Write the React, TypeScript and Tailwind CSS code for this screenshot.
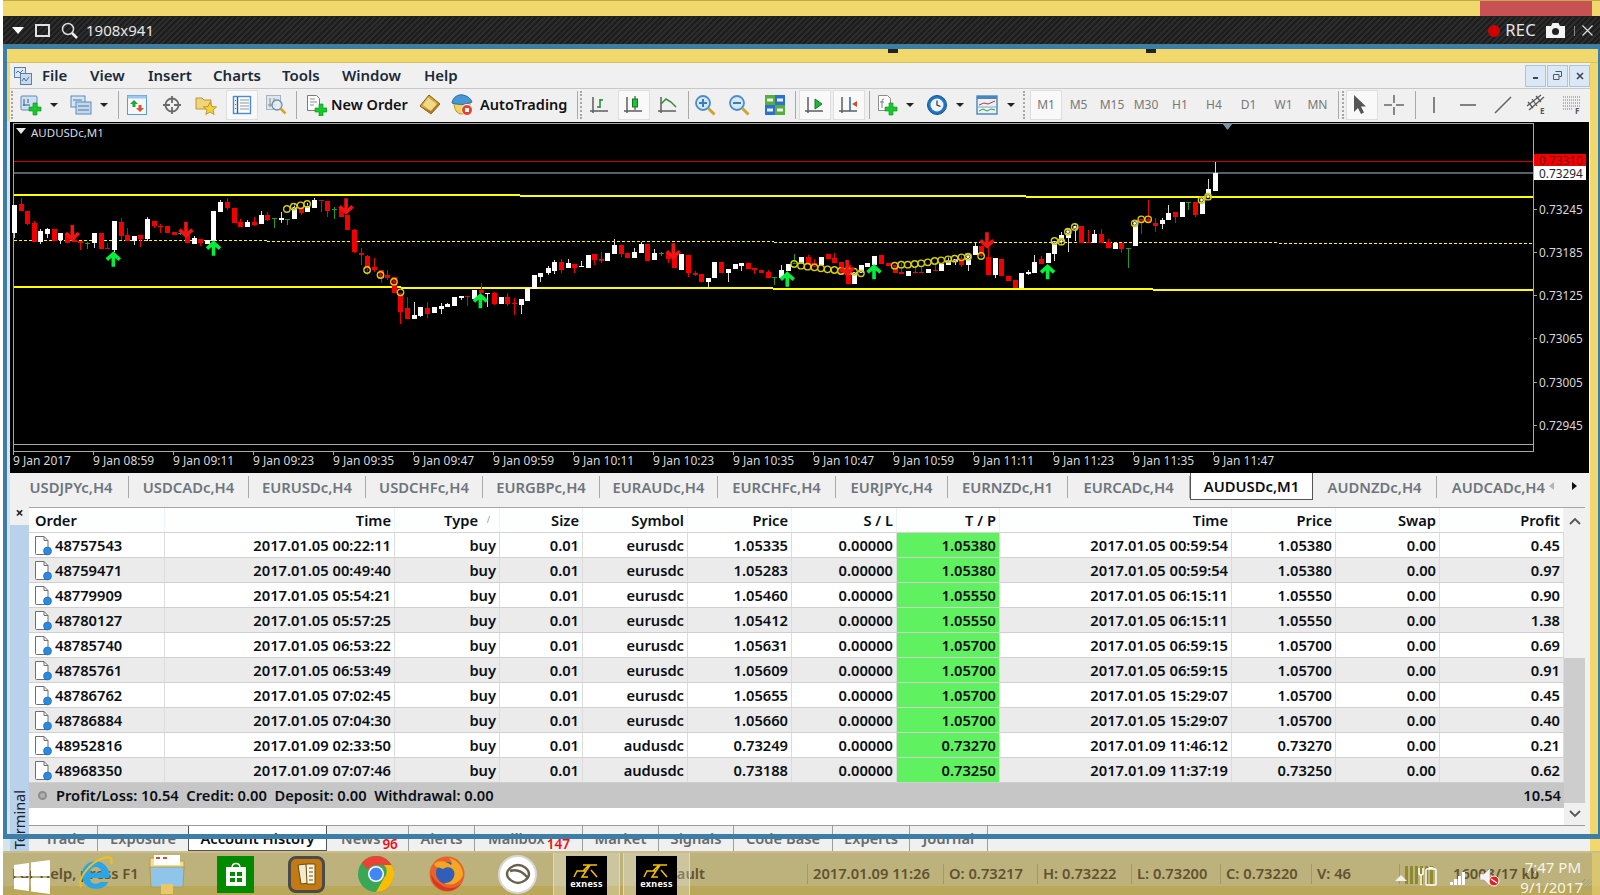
import type { ReactNode } from 'react'

// chart data was read off the reference: [x, colour, wick top, body top, body bottom, wick bottom]
type Candle = [number, 'w' | 'r' | 'g', number, number, number, number]

const seg1: Candle[] = [
  [42, 'w', 225, 225, 308, 325], [60, 'r', 205, 222, 243, 243], [79, 'r', 243, 243, 283, 285], [98, 'r', 272, 280, 335, 335],
  [117, 'w', 297, 303, 335, 343], [137, 'w', 295, 297, 312, 323], [156, 'r', 298, 298, 332, 332], [175, 'w', 310, 310, 330, 343],
  [195, 'r', 312, 312, 338, 338], [214, 'r', 325, 330, 335, 335], [233, 'r', 333, 333, 338, 360], [253, 'g', 336, 338, 342, 357],
  [272, 'w', 310, 310, 340, 353], [292, 'r', 308, 308, 358, 358], [311, 'r', 340, 355, 358, 358], [330, 'w', 273, 273, 360, 365],
  [350, 'r', 265, 276, 318, 330], [369, 'r', 293, 316, 332, 332], [388, 'w', 318, 318, 332, 344], [408, 'r', 316, 316, 328, 350],
  [428, 'w', 262, 267, 326, 332], [447, 'r', 272, 272, 288, 294], [466, 'r', 283, 288, 290, 310], [486, 'r', 288, 288, 310, 310],
  [505, 'r', 306, 306, 314, 314], [524, 'g', 306, 310, 313, 316], [543, 'r', 308, 308, 340, 340], [563, 'w', 318, 323, 342, 342],
  [582, 'r', 326, 326, 340, 347], [601, 'w', 330, 330, 342, 342], [620, 'w', 243, 243, 332, 336], [640, 'w', 210, 215, 246, 246],
  [660, 'r', 205, 217, 233, 240], [679, 'r', 233, 233, 278, 278], [698, 'r', 268, 276, 290, 290], [718, 'w', 270, 275, 290, 290],
  [737, 'r', 262, 276, 285, 287], [757, 'w', 243, 254, 283, 283], [776, 'r', 245, 255, 270, 272], [795, 'g', 265, 265, 268, 293],
  [815, 'w', 245, 265, 270, 278], [834, 'g', 266, 266, 268, 286], [853, 'w', 220, 230, 268, 268], [873, 'r', 230, 230, 248, 255],
  [892, 'w', 218, 228, 247, 247], [912, 'w', 203, 210, 233, 233], [931, 'r', 210, 210, 212, 245], [950, 'r', 213, 213, 244, 260],
  [970, 'g', 230, 236, 238, 268], [989, 'r', 235, 235, 262, 262], [1008, 'r', 255, 255, 300, 300], [1028, 'r', 296, 300, 365, 368],
  [1047, 'r', 355, 370, 376, 405], [1067, 'r', 374, 378, 418, 435], [1086, 'r', 384, 411, 420, 425], [1105, 'r', 420, 420, 445, 458],
  [1125, 'r', 420, 435, 443, 450], [1144, 'r', 442, 442, 490, 490], [1163, 'r', 490, 490, 545, 583], [1183, 'r', 500, 535, 568, 568],
  [1202, 'w', 516, 555, 568, 568], [1221, 'w', 532, 532, 558, 562], [1241, 'r', 516, 533, 553, 563], [1260, 'w', 532, 532, 550, 550],
  [1280, 'w', 520, 528, 538, 552], [1299, 'w', 518, 523, 530, 532], [1318, 'w', 502, 502, 527, 527], [1338, 'w', 498, 498, 505, 510],
  [1357, 'r', 498, 498, 500, 527], [1376, 'w', 480, 480, 506, 506], [1396, 'r', 460, 480, 490, 490], [1415, 'w', 488, 488, 492, 530],
  [1435, 'r', 486, 488, 522, 525], [1454, 'w', 500, 500, 522, 522], [1473, 'r', 490, 500, 522, 527], [1493, 'r', 505, 518, 520, 555],
  [1512, 'w', 508, 508, 525, 553], [1531, 'w', 475, 475, 512, 512], [1550, 'w', 435, 435, 478, 478],
]

const seg2: Candle[] = [
  [0, 'w', 430, 430, 440, 455], [22, 'w', 408, 415, 430, 436], [42, 'w', 390, 395, 422, 432], [61, 'r', 388, 396, 420, 428],
  [80, 'w', 388, 400, 415, 415], [100, 'r', 402, 402, 415, 428], [119, 'w', 393, 408, 412, 412], [138, 'w', 376, 376, 413, 413],
  [158, 'r', 373, 373, 390, 405], [177, 'r', 365, 388, 393, 398], [196, 'w', 370, 370, 392, 392], [216, 'w', 328, 345, 373, 373],
  [235, 'r', 345, 345, 373, 380], [254, 'r', 370, 370, 383, 383], [274, 'w', 355, 365, 383, 383], [293, 'w', 335, 342, 368, 368],
  [312, 'r', 342, 342, 392, 392], [332, 'w', 358, 370, 390, 390], [351, 'g', 366, 370, 373, 377], [371, 'r', 370, 370, 388, 398],
  [390, 'r', 375, 375, 413, 413], [410, 'w', 372, 372, 420, 420], [429, 'r', 375, 375, 430, 440], [449, 'r', 423, 428, 436, 438],
  [468, 'r', 432, 432, 455, 455], [487, 'w', 443, 443, 455, 472], [506, 'w', 396, 396, 443, 443], [526, 'r', 396, 396, 430, 430],
  [545, 'w', 418, 418, 428, 455], [565, 'w', 403, 403, 418, 418], [584, 'w', 400, 400, 407, 422], [603, 'r', 400, 400, 418, 418],
  [622, 'r', 415, 415, 420, 432], [642, 'r', 419, 419, 428, 428], [661, 'r', 420, 425, 443, 443], [680, 'g', 440, 440, 442, 465],
  [700, 'w', 405, 420, 443, 443], [719, 'w', 403, 403, 423, 423], [738, 'g', 372, 398, 402, 402], [758, 'w', 380, 380, 402, 402],
  [777, 'r', 375, 380, 405, 405], [797, 'r', 388, 400, 410, 410], [816, 'w', 380, 380, 405, 405], [835, 'r', 372, 372, 388, 388],
  [855, 'r', 370, 385, 400, 400], [874, 'r', 397, 397, 435, 435], [893, 'r', 405, 405, 462, 462], [912, 'w', 425, 425, 462, 462],
  [932, 'w', 405, 405, 430, 430], [951, 'w', 400, 400, 410, 410], [970, 'w', 378, 378, 405, 405], [990, 'r', 376, 376, 403, 403],
  [1010, 'r', 400, 400, 407, 407], [1030, 'r', 405, 405, 430, 430], [1049, 'r', 400, 426, 433, 433], [1068, 'w', 423, 423, 437, 437],
  [1088, 'r', 410, 425, 428, 428], [1107, 'r', 408, 425, 428, 428], [1126, 'w', 417, 417, 428, 428], [1146, 'r', 403, 420, 423, 423],
  [1165, 'w', 402, 402, 422, 422], [1185, 'w', 380, 390, 405, 405], [1204, 'w', 388, 388, 395, 405], [1224, 'r', 373, 385, 405, 410],
  [1243, 'w', 372, 372, 405, 422], [1262, 'w', 337, 348, 375, 375], [1281, 'r', 348, 348, 378, 380], [1301, 'r', 350, 382, 435, 435],
  [1320, 'w', 383, 383, 435, 443], [1340, 'r', 388, 388, 437, 437], [1359, 'r', 438, 438, 453, 453], [1378, 'r', 450, 450, 473, 473],
  [1398, 'w', 428, 428, 473, 473], [1417, 'w', 420, 425, 432, 436], [1436, 'w', 375, 396, 428, 428], [1456, 'r', 378, 388, 403, 403],
  [1475, 'w', 368, 368, 400, 400], [1494, 'w', 333, 333, 373, 393], [1514, 'w', 305, 315, 336, 345], [1533, 'w', 298, 298, 325, 365],
  [1553, 'w', 280, 288, 296, 333],
]

const seg3: Candle[] = [
  [62, 'r', 288, 288, 338, 338], [81, 'r', 300, 335, 338, 338], [100, 'w', 300, 313, 340, 340], [120, 'r', 297, 312, 338, 338],
  [139, 'r', 328, 335, 353, 353], [159, 'w', 340, 340, 357, 357], [178, 'r', 340, 340, 358, 368], [198, 'g', 355, 355, 358, 415],
  [217, 'w', 272, 272, 347, 347], [236, 'r', 268, 268, 280, 312], [256, 'r', 210, 268, 280, 280], [275, 'r', 265, 278, 288, 305],
  [295, 'w', 265, 270, 282, 297], [314, 'w', 225, 250, 270, 270], [334, 'r', 245, 245, 260, 278], [353, 'w', 215, 215, 262, 262],
  [373, 'g', 215, 215, 217, 240], [392, 'r', 215, 215, 255, 260], [411, 'w', 205, 205, 252, 252], [430, 'w', 147, 178, 200, 200],
  [450, 'w', 97, 128, 183, 183],
]

const sx1 = (x: number) => x / 2.904
const sx2 = (x: number) => 540 + x / 2.904
const sx3 = (x: number) => 1060 + x / 2.904
const sy = (y: number) => 130 + y / 3

const candles = [
  ...seg1.map((c) => ({ c, x: Math.round(sx1(c[0])) })),
  ...seg2.map((c) => ({ c, x: Math.round(sx2(c[0])) })),
  ...seg3.map((c) => ({ c, x: Math.round(sx3(c[0])) })),
]

const rings: [number, number][] = [
  ...[[833, 237], [853, 230], [873, 226], [892, 222], [1066, 420], [1105, 435], [1144, 455], [1163, 487]].map(([x, y]) => [sx1(x), sy(y)] as [number, number]),
  ...[[738, 402], [758, 407], [777, 410], [797, 412], [816, 415], [835, 418], [855, 420], [874, 423], [893, 423], [912, 425], [932, 430], [1030, 407], [1049, 404], [1068, 404], [1088, 402], [1107, 400], [1126, 397], [1146, 393], [1165, 391], [1185, 388], [1204, 386], [1224, 382], [1243, 380], [1281, 378], [1494, 333], [1514, 335], [1533, 305], [1553, 291]].map(([x, y]) => [sx2(x), sy(y)] as [number, number]),
  ...[[217, 280], [236, 268], [256, 268], [411, 210], [430, 200]].map(([x, y]) => [sx3(x), sy(y)] as [number, number]),
]

const upArrows = [[sx1(329), 365], [sx1(620), 332], [sx1(1395), 490], [sx2(718), 425], [sx2(970), 403], [sx2(1474), 403]]
const downArrows = [[sx1(210), 330], [sx1(540), 320], [sx1(1005), 250], [sx2(387), 385], [sx2(892), 435], [sx2(1298), 352]]

const timeLabels = ['9 Jan 2017', '9 Jan 08:59', '9 Jan 09:11', '9 Jan 09:23', '9 Jan 09:35', '9 Jan 09:47', '9 Jan 09:59', '9 Jan 10:11', '9 Jan 10:23', '9 Jan 10:35', '9 Jan 10:47', '9 Jan 10:59', '9 Jan 11:11', '9 Jan 11:23', '9 Jan 11:35', '9 Jan 11:47']
const prices: [string, number][] = [['0.73245', 209], ['0.73185', 252], ['0.73125', 295], ['0.73065', 338], ['0.73005', 382], ['0.72945', 425]]

const colour = { w: '#ffffff', r: '#f00000', g: '#1f9a2e' }

function Chart() {
  return (
    <svg className="block w-[1579px] h-[351px] bg-black" viewBox="10 122 1579 351">
      <rect x="13.5" y="123.5" width="1520" height="321" fill="none" stroke="#a8a8a8" />
      <rect x="13.5" y="444.5" width="1520" height="7" fill="none" stroke="#a8a8a8" />
      <path d="M1222 123h11l-5.5 7z" fill="#7c93a8" />
      <path d="M16 128h10l-5 6z" fill="#e8e8e8" />
      <text x="31" y="137" fontSize="11.5" fill="#d5dde4">AUDUSDc,M1</text>

      <line x1="14" x2="1533" y1="161.5" y2="161.5" stroke="#d00000" />
      <line x1="14" x2="1533" y1="173" y2="173" stroke="#56606c" strokeWidth="2" />
      <g stroke="#ffff00" strokeWidth="2">
        <path d="M14 195H520M520 196H1026M1026 197H1533" fill="none" />
        <path d="M14 287H401M401 288H773M773 289H1153M1153 290H1533" fill="none" />
      </g>
      <path d="M14 240.5H267M267 241.5H774M774 242.5H1279M1279 243.5H1533" fill="none" stroke="#ffff00" strokeDasharray="3 2" />

      <g shapeRendering="crispEdges">
        {candles.map(({ c, x }, i) => (
          <g key={i}>
            <line x1={x + 0.5} x2={x + 0.5} y1={sy(c[2])} y2={sy(c[5])} stroke={c[1] === 'w' ? '#d8d8d8' : colour[c[1]]} />
            <rect x={x - 2} y={sy(c[3])} width="5" height={Math.max(1, (c[4] - c[3]) / 3)} fill={colour[c[1]]} />
          </g>
        ))}
      </g>

      {rings.map(([x, y], i) => (
        <g key={i}>
          <circle cx={x} cy={y} r="3.2" fill="none" stroke="#d4cf00" strokeWidth="1.4" />
          <circle cx={x} cy={y} r="1.8" fill="none" stroke="#000" strokeWidth="0.6" />
        </g>
      ))}
      {upArrows.map(([x, y], i) => (
        <path key={i} d={`M${x} ${sy(y) + 15}V${sy(y) + 2}M${x - 6.5} ${sy(y) + 8}L${x} ${sy(y) + 2}L${x + 6.5} ${sy(y) + 8}`} fill="none" stroke="#00ee3c" strokeWidth="3.6" />
      ))}
      {downArrows.map(([x, y], i) => (
        <path key={i} d={`M${x} ${sy(y) - 15}V${sy(y) - 1}M${x - 6.5} ${sy(y) - 7}L${x} ${sy(y) - 1}L${x + 6.5} ${sy(y) - 7}`} fill="none" stroke="#f01414" strokeWidth="3.6" />
      ))}

      <rect x="1534" y="154" width="52" height="12" fill="#f00000" />
      <rect x="1534" y="166" width="52" height="14" fill="#ffffff" />
      <text x="1539" y="164.5" fontSize="11.8" fill="#7a1010">0.73310</text>
      <text x="1539" y="177.5" fontSize="11.8" fill="#1a2430">0.73294</text>
      {prices.map(([p, y]) => (
        <g key={p}>
          <line x1="1533" x2="1537" y1={y + 0.5} y2={y + 0.5} stroke="#a8a8a8" />
          <text x="1539" y={y + 4.5} fontSize="11.8" fill="#d8d8d8">{p}</text>
        </g>
      ))}
      {timeLabels.map((t, i) => (
        <g key={t}>
          <line x1={13.5 + i * 80} x2={13.5 + i * 80} y1="452" y2="455" stroke="#a8a8a8" />
          <text x={13 + i * 80} y="465" fontSize="12" fill="#d8d8d8">{t}</text>
        </g>
      ))}
    </svg>
  )
}

function Ico({ children, w = 22 }: { children: ReactNode; w?: number }) {
  return (
    <svg width={w} height="22" viewBox={`0 0 ${w} 22`} className="block shrink-0">
      {children}
    </svg>
  )
}

const Plus = ({ x = 10, y = 10 }: { x?: number; y?: number }) => (
  <path transform={`translate(${x} ${y})`} d="M4 0h4v4h4v4H8v4H4V8H0V4h4z" fill="#18c92e" stroke="#0a8a1a" strokeWidth="0.6" />
)
const Axes = () => <path d="M4 3v16M1 17h18" stroke="#5e5e5e" strokeWidth="1.5" fill="none" />

const icons: Record<string, ReactNode> = {
  newChart: (
    <Ico>
      <rect x="1" y="2" width="16" height="14" rx="1" fill="#cfe0f2" stroke="#5b8cbc" />
      <path d="M4 5v7M3 11h7M8 5v4" stroke="#35607f" fill="none" />
      <Plus x={9} y={9} />
    </Ico>
  ),
  profiles: (
    <Ico>
      <rect x="1" y="2" width="14" height="11" fill="#d6e4f3" stroke="#5b8cbc" />
      <rect x="6" y="8" width="15" height="12" fill="#c3d8ee" stroke="#5b8cbc" />
      <path d="M3 6h9M8 12h11M8 16h11" stroke="#4f7899" />
    </Ico>
  ),
  market: (
    <Ico>
      <rect x="1.5" y="1.5" width="19" height="19" fill="#f4f7fb" stroke="#5b9bd1" />
      <rect x="1.5" y="1.5" width="19" height="3" fill="#9cc6ea" />
      <path d="M8 6l4 4H9.5v3h-3v-3H4z" fill="#1da82f" />
      <path d="M14 18l-4-4h2.5v-3h3v3H18z" fill="#e2502a" />
    </Ico>
  ),
  data: (
    <Ico>
      <circle cx="11" cy="11" r="6.5" fill="none" stroke="#6a6a6a" strokeWidth="1.8" />
      <path d="M11 2v7M11 13v7M2 11h7M13 11h7" stroke="#6a6a6a" strokeWidth="1.8" />
    </Ico>
  ),
  nav: (
    <Ico>
      <path d="M1 4h6l2 2h7v9H1z" fill="#f2d57a" stroke="#b8963a" />
      <path d="M15 8l2 4.5 4.6.4-3.5 3 1.1 4.6-4.2-2.5-4.2 2.5 1.1-4.6-3.5-3 4.6-.4z" fill="#f4cf35" stroke="#b08c1e" strokeWidth="0.8" />
    </Ico>
  ),
  term: (
    <Ico>
      <rect x="2.5" y="2.5" width="17" height="17" fill="#fbfcfe" stroke="#4a8ccc" strokeWidth="1.4" />
      <path d="M6.5 3v16" stroke="#2a62a8" strokeWidth="1.4" />
      <path d="M9 6h9M9 9h9M9 12h9M9 15h9" stroke="#8a97a6" />
      <path d="M4.500 6v1M4.500 10v1M4.500 14v1" stroke="#d03a2a" />
    </Ico>
  ),
  tester: (
    <Ico>
      <rect x="1.5" y="1.5" width="14" height="14" fill="#dfe6ee" stroke="#a7b3bf" />
      <path d="M5 4v9M3 11h9M9 4v5" stroke="#8a8a8a" fill="none" />
      <circle cx="12" cy="11" r="5" fill="#e6f0f8" fillOpacity="0.8" stroke="#6f8ea8" strokeWidth="1.3" />
      <path d="M15.5 14.5l5 5" stroke="#d8a428" strokeWidth="2.5" />
    </Ico>
  ),
  order: (
    <Ico>
      <path d="M2.5 1.5h9l3 3v12h-12z" fill="#fff" stroke="#7b7b7b" />
      <path d="M5 5h5M5 8h7M5 11h4" stroke="#8b8b8b" />
      <Plus x={10} y={10} />
    </Ico>
  ),
  gold: (
    <Ico>
      <path d="M10 1l11 9-9 10L1 12z" fill="#d9a93c" stroke="#7c5a14" />
      <path d="M9 3.500l9 7-6 6.500-8-6z" fill="#f1d987" />
      <path d="M1 12l11 8 9-10-2-1-7 8z" fill="#a97c26" />
    </Ico>
  ),
  auto: (
    <Ico>
      <path d="M3 8c0 8 3 12 8 12s8-4 8-12z" fill="#f3d35b" stroke="#b59427" />
      <path d="M1 9c1-6 6-9 11-8 5 1 8 4 9 7-6 3-14 3-20 1z" fill="#4a97d6" stroke="#2a6ea8" />
      <circle cx="16" cy="16" r="5.5" fill="#e8412e" stroke="#fff" />
      <rect x="14" y="14" width="4" height="4" fill="#fff" />
    </Ico>
  ),
  bars: (
    <Ico>
      <Axes />
      <path d="M11 5v9M8 13h3M11 6h3" stroke="#1f8c2e" strokeWidth="1.5" fill="none" />
    </Ico>
  ),
  candle: (
    <Ico>
      <Axes />
      <path d="M12 2v14" stroke="#333" />
      <rect x="9.5" y="5" width="5" height="8" fill="#1ec436" stroke="#117a22" />
    </Ico>
  ),
  line: (
    <Ico>
      <Axes />
      <path d="M4 10L9 5l5 3 5 5" stroke="#2f8f3c" strokeWidth="1.5" fill="none" />
    </Ico>
  ),
  zoomIn: (
    <Ico>
      <circle cx="9" cy="9" r="7" fill="#d4e8f8" stroke="#4a8ec8" strokeWidth="1.8" />
      <path d="M5 9h8M9 5v8" stroke="#3c7cb4" strokeWidth="2" />
      <path d="M14.5 14.5l6 6" stroke="#cda52c" strokeWidth="3" />
    </Ico>
  ),
  zoomOut: (
    <Ico>
      <circle cx="9" cy="9" r="7" fill="#d4e8f8" stroke="#4a8ec8" strokeWidth="1.8" />
      <path d="M5 9h8" stroke="#3c7cb4" strokeWidth="2" />
      <path d="M14.5 14.5l6 6" stroke="#cda52c" strokeWidth="3" />
    </Ico>
  ),
  tile: (
    <Ico>
      <rect x="1" y="1" width="10" height="10" fill="#58ad3e" />
      <rect x="11" y="1" width="10" height="10" fill="#2c6fd2" />
      <rect x="1" y="11" width="10" height="10" fill="#2c6fd2" />
      <rect x="11" y="11" width="10" height="10" fill="#58ad3e" />
      <path d="M3 6h6M13 6h6M3 16h6M13 16h6" stroke="#e8f2ea" strokeWidth="3" />
    </Ico>
  ),
  scroll: (
    <Ico>
      <Axes />
      <path d="M11 5l7 5-7 5z" fill="#21b53a" stroke="#127a24" />
    </Ico>
  ),
  shift: (
    <Ico>
      <Axes />
      <path d="M12 3v14" stroke="#2a5fc0" strokeWidth="1.5" />
      <path d="M14 10l5-3v6z" fill="#d84a20" />
    </Ico>
  ),
  indicator: (
    <Ico>
      <path d="M2.5 1.5h9l3 3v12h-12z" fill="#fff" stroke="#8c8c8c" />
      <path d="M8 5c-2 0-2 1-2 3v6M4 8h4" stroke="#7b7b7b" fill="none" />
      <Plus x={9} y={9} />
    </Ico>
  ),
  clock: (
    <Ico>
      <circle cx="11" cy="11" r="9.5" fill="#1f74c4" stroke="#15558f" />
      <circle cx="11" cy="11" r="6.5" fill="#eef4fa" />
      <path d="M11 6.5V11l3.500 1.500" stroke="#333" strokeWidth="1.2" fill="none" />
    </Ico>
  ),
  template: (
    <Ico>
      <rect x="1" y="2" width="20" height="18" fill="#e9f0f7" stroke="#4a85bb" strokeWidth="1.4" />
      <rect x="1" y="2" width="20" height="3" fill="#4a85bb" />
      <path d="M3 11l5-2 4 1 7-3" stroke="#c23a26" fill="none" />
      <path d="M1 13h20" stroke="#7fa6c9" />
      <path d="M3 17l4-2 4 2 4-2 4 1" stroke="#2f9a3c" fill="none" />
    </Ico>
  ),
  cursor: (
    <Ico>
      <path d="M3 1v17l4-4 3 6 3-1.5-3-6h5z" fill="#555" />
    </Ico>
  ),
  cross: (
    <Ico>
      <path d="M11 1v8M11 13v8M1 11h8M13 11h8" stroke="#666" strokeWidth="1.5" />
    </Ico>
  ),
  vline: (
    <Ico>
      <path d="M11 3v16" stroke="#666" strokeWidth="1.6" />
    </Ico>
  ),
  hline: (
    <Ico>
      <path d="M3 11h16" stroke="#666" strokeWidth="1.6" />
    </Ico>
  ),
  trend: (
    <Ico>
      <path d="M3 19L19 3" stroke="#666" strokeWidth="1.6" />
    </Ico>
  ),
  channel: (
    <Ico>
      <path d="M1 12L15 1M3 16L18 3M2 8l5 6M6 5l5 7M10 2l5 6" stroke="#555" strokeWidth="1.2" fill="none" />
      <text x="14" y="20" fontSize="8" fontWeight="700" fill="#555">E</text>
    </Ico>
  ),
  fibo: (
    <Ico>
      <path d="M2 3h17M2 6h17M2 9h17M2 12h17M2 15h10" stroke="#777" strokeDasharray="1 1" />
      <text x="14" y="20" fontSize="8" fontWeight="700" fill="#555">F</text>
    </Ico>
  ),
}

const Dd = ({ className }: { className: string }) => (
  <div className={`${className} w-0 h-0 border-x-[4px] border-x-transparent border-t-[4px] border-t-[#222] shrink-0`} />
)
const Sep = ({ className }: { className: string }) => <div className={`${className} w-px h-[28px] bg-[#a9a9a9] shrink-0`} />
const Grip = ({ className }: { className: string }) => (
  <div className={`${className} w-[2px] h-[28px] shrink-0 border-l-2 border-dotted border-[#a6a6a6]`} />
)
const Raised = ({ className, children }: { className: string; children: ReactNode }) => (
  <div className={`${className} w-[32px] h-[30px] shrink-0 flex items-center justify-center bg-[#f9f9f9] border border-[#dedede]`}>{children}</div>
)
const Slot = ({ className, children }: { className: string; children: ReactNode }) => <div className={`${className} shrink-0`}>{children}</div>

function Toolbar() {
  return (
    <div className="h-[32px] flex items-center bg-[#f0f0f0] border-t border-[#c8c8c8]">
      <Grip className="ml-[1px]" />
      <Slot className="ml-[7px]">{icons.newChart}</Slot>
      <Dd className="ml-[8px]" />
      <Slot className="ml-[12px]">{icons.profiles}</Slot>
      <Dd className="ml-[8px]" />
      <Sep className="ml-[10px]" />
      <Slot className="ml-[7px]">{icons.market}</Slot>
      <Slot className="ml-[13px]">{icons.data}</Slot>
      <Slot className="ml-[12px]">{icons.nav}</Slot>
      <Raised className="ml-[9px]">{icons.term}</Raised>
      <Slot className="ml-[7px]">{icons.tester}</Slot>
      <Sep className="ml-[9px]" />
      <Slot className="ml-[8px]">{icons.order}</Slot>
      <div className="ml-[4px] w-[75px] shrink-0 text-[14.5px] font-semibold text-[#111] whitespace-nowrap">New Order</div>
      <Slot className="ml-[13px]">{icons.gold}</Slot>
      <Slot className="ml-[10px]">{icons.auto}</Slot>
      <div className="ml-[7px] w-[89px] shrink-0 text-[14.5px] font-semibold text-[#111] whitespace-nowrap">AutoTrading</div>
      <Sep className="ml-[8px]" />
      <Grip className="ml-[2px]" />
      <Slot className="ml-[7px]">{icons.bars}</Slot>
      <Raised className="ml-[7px]">{icons.candle}</Raised>
      <Slot className="ml-[7px]">{icons.line}</Slot>
      <Sep className="ml-[9px]" />
      <Slot className="ml-[5px]">{icons.zoomIn}</Slot>
      <Slot className="ml-[12px]">{icons.zoomOut}</Slot>
      <Slot className="ml-[14px]">{icons.tile}</Slot>
      <Sep className="ml-[9px]" />
      <Raised className="ml-[3px]">{icons.scroll}</Raised>
      <Raised className="ml-[2px]">{icons.shift}</Raised>
      <Sep className="ml-[4px]" />
      <Slot className="ml-[6px]">{icons.indicator}</Slot>
      <Dd className="ml-[8px]" />
      <Slot className="ml-[12px]">{icons.clock}</Slot>
      <Dd className="ml-[8px]" />
      <Slot className="ml-[12px]">{icons.template}</Slot>
      <Dd className="ml-[9px]" />
      <Grip className="ml-[8px]" />
      <Raised className="ml-[5px] text-[12px] text-[#777]">M1</Raised>
      <div className="w-[33px] shrink-0 text-center text-[12px] text-[#777]">M5</div>
      {['M15', 'M30', 'H1', 'H4'].map((p) => (
        <div key={p} className="w-[34px] shrink-0 text-center text-[12px] text-[#777]">{p}</div>
      ))}
      {['D1', 'W1'].map((p) => (
        <div key={p} className="w-[35px] shrink-0 text-center text-[12px] text-[#777]">{p}</div>
      ))}
      <div className="w-[33px] shrink-0 text-center text-[12px] text-[#777]">MN</div>
      <Sep className="ml-[4px]" />
      <Grip className="ml-[3px]" />
      <Raised className="ml-[2px]">{icons.cursor}</Raised>
      <Slot className="ml-[5px]">{icons.cross}</Slot>
      <Sep className="ml-[10px]" />
      <Slot className="ml-[7px]">{icons.vline}</Slot>
      <Slot className="ml-[12px]">{icons.hline}</Slot>
      <Slot className="ml-[13px]">{icons.trend}</Slot>
      <Slot className="ml-[12px]">{icons.channel}</Slot>
      <Slot className="ml-[13px]">{icons.fibo}</Slot>
    </div>
  )
}

function MenuBar() {
  return (
    <div className="h-[25px] flex items-center bg-[#f0f0f0] text-[15px] font-semibold text-[#1b2a38]">
      <svg width="18" height="18" viewBox="0 0 18 18" className="ml-[4px] shrink-0">
        <rect x="0.5" y="0.5" width="11" height="10" fill="#dfe8f2" stroke="#5c7fa6" />
        <rect x="6.5" y="6.5" width="11" height="11" fill="#c9daed" stroke="#5c7fa6" />
        <path d="M2 6l2-2 2 2 3-3M8 14l2-3 2 3 3-4" stroke="#4a6f99" fill="none" />
      </svg>
      <div className="ml-[10px] w-[48px]">File</div>
      <div className="w-[58px]">View</div>
      <div className="w-[65px]">Insert</div>
      <div className="w-[69px]">Charts</div>
      <div className="w-[60px]">Tools</div>
      <div className="w-[82px]">Window</div>
      <div>Help</div>
      <div className="ml-auto flex h-[22px] font-normal text-[#445] gap-px">
        <div className="w-[21px] flex items-center justify-center bg-[#dbe8f5] border border-[#a9c4dc]">
          <div className="w-[5px] h-[2px] mt-[5px] bg-[#445]" />
        </div>
        <div className="w-[21px] flex items-center justify-center bg-[#dbe8f5] border border-[#a9c4dc]">
          <svg width="9" height="9" viewBox="0 0 9 9"><path d="M2.5.5h6v5h-2M.5 3.5h5.500v5H.5z" fill="none" stroke="#556" /></svg>
        </div>
        <div className="w-[21px] flex items-center justify-center bg-[#dbe8f5] border border-[#a9c4dc]">
          <svg width="8" height="8" viewBox="0 0 8 8"><path d="M1 1l6 6M7 1L1 7" stroke="#445" strokeWidth="1.6" /></svg>
        </div>
      </div>
    </div>
  )
}

const chartTabs: [string, string][] = [
  ['USDJPYc,H4', 'w-[115px]'], ['USDCADc,H4', 'w-[120px]'], ['EURUSDc,H4', 'w-[117px]'], ['USDCHFc,H4', 'w-[117px]'],
  ['EURGBPc,H4', 'w-[117px]'], ['EURAUDc,H4', 'w-[118px]'], ['EURCHFc,H4', 'w-[118px]'], ['EURJPYc,H4', 'w-[112px]'],
  ['EURNZDc,H1', 'w-[120px]'], ['EURCADc,H4', 'w-[122px]'],
]

function ChartTabs() {
  return (
    <div className="h-[27px] flex items-start pl-[4px] bg-[#f0f0f0] text-[14.8px] font-semibold text-[#6e757c] overflow-hidden whitespace-nowrap">
      {chartTabs.map(([t, w]) => (
        <div key={t} className={`${w} h-[22px] mt-[3px] shrink-0 flex items-center justify-center border-r border-[#a9a9a9]`}>{t}</div>
      ))}
      <div className="w-[123px] h-[27px] pt-[1px] shrink-0 flex items-center justify-center bg-white text-[#0c0c0c] border-x border-b border-[#555]">AUDUSDc,M1</div>
      <div className="w-[124px] h-[22px] mt-[3px] shrink-0 flex items-center justify-center border-r border-[#a9a9a9]">AUDNZDc,H4</div>
      <div className="w-[108px] h-[22px] mt-[3px] shrink-0 flex items-center justify-end overflow-hidden">AUDCADc,H4</div>
      <div className="ml-[4px] mt-[9px] w-0 h-0 border-y-[4px] border-y-transparent border-r-[5px] border-r-[#b5b5b5]" />
      <div className="ml-[18px] mt-[9px] w-0 h-0 border-y-[4px] border-y-transparent border-l-[5px] border-l-[#111]" />
    </div>
  )
}

type Row = [string, string, string, string, string, string, string, string]
const rows: Row[] = [
  ['48757543', '2017.01.05 00:22:11', 'eurusdc', '1.05335', '1.05380', '2017.01.05 00:59:54', '1.05380', '0.45'],
  ['48759471', '2017.01.05 00:49:40', 'eurusdc', '1.05283', '1.05380', '2017.01.05 00:59:54', '1.05380', '0.97'],
  ['48779909', '2017.01.05 05:54:21', 'eurusdc', '1.05460', '1.05550', '2017.01.05 06:15:11', '1.05550', '0.90'],
  ['48780127', '2017.01.05 05:57:25', 'eurusdc', '1.05412', '1.05550', '2017.01.05 06:15:11', '1.05550', '1.38'],
  ['48785740', '2017.01.05 06:53:22', 'eurusdc', '1.05631', '1.05700', '2017.01.05 06:59:15', '1.05700', '0.69'],
  ['48785761', '2017.01.05 06:53:49', 'eurusdc', '1.05609', '1.05700', '2017.01.05 06:59:15', '1.05700', '0.91'],
  ['48786762', '2017.01.05 07:02:45', 'eurusdc', '1.05655', '1.05700', '2017.01.05 15:29:07', '1.05700', '0.45'],
  ['48786884', '2017.01.05 07:04:30', 'eurusdc', '1.05660', '1.05700', '2017.01.05 15:29:07', '1.05700', '0.40'],
  ['48952816', '2017.01.09 02:33:50', 'audusdc', '0.73249', '0.73270', '2017.01.09 11:46:12', '0.73270', '0.21'],
  ['48968350', '2017.01.09 07:07:46', 'audusdc', '0.73188', '0.73250', '2017.01.09 11:37:19', '0.73250', '0.62'],
]

const grid = 'grid grid-cols-[136px_230px_105px_83px_105px_104px_105px_103px_232px_104px_104px_124px]'
const cell = 'px-[3px] text-right border-r border-[#dcdcdc] leading-[24px] whitespace-nowrap overflow-hidden'

function DocIcon() {
  return (
    <svg width="20" height="21" viewBox="0 0 20 21" className="shrink-0">
      <path d="M2.5 1.5h8.500l4 4v13c0 .6-.4 1-1 1h-10.500c-.6 0-1-.4-1-1z" fill="#fff" stroke="#6f6f6f" />
      <path d="M11 1.500v4h4" fill="none" stroke="#6f6f6f" />
      <circle cx="14.5" cy="16" r="4" fill="#2a8ae0" stroke="#1a5ea8" strokeWidth="0.6" />
    </svg>
  )
}

function Chevron({ d }: { d: string }) {
  return (
    <svg width="12" height="8" viewBox="0 0 12 8">
      <path d={d} fill="none" stroke="#555" strokeWidth="1.8" />
    </svg>
  )
}

function Terminal() {
  return (
    <div className="h-[351px] flex bg-[#f0f0f0]">
      <div className="w-[19px] flex flex-col shrink-0">
        <div className="h-[25px] text-center text-[14px] leading-[26px] font-bold text-[#222]">×</div>
        <div className="flex-1 bg-[#b9d1ea] flex items-end justify-center pb-[2px]">
          <div className="[writing-mode:vertical-rl] rotate-180 text-[14.5px] text-[#16222e] leading-none">Terminal</div>
        </div>
      </div>
      <div className="flex-1 flex flex-col pt-[7px] pr-[5px] text-[14.7px] font-semibold text-[#0a0f14]">
        <div className="flex border-t border-[#a6a6a6]">
          <div className="flex-1 bg-white">
            <div className={`${grid} h-[25px] bg-[#fdfefe] border-b border-[#d4d4d4]`}>
              <div className="px-[6px] leading-[24px] border-r border-[#eaf2fa]">Order</div>
              {['Time', 'Type', 'Size', 'Symbol', 'Price', 'S / L', 'T / P', 'Time', 'Price', 'Swap', 'Profit'].map((h, i) => (
                <div key={i} className={`${cell} border-[#eaf2fa] ${h === 'Type' ? 'pr-[21px] relative' : ''}`}>
                  {h}
                  {h === 'Type' && <span className="absolute right-[9px] top-0 text-[9px] font-normal text-[#999]">/</span>}
                </div>
              ))}
            </div>
            {rows.map((r, i) => (
              <div key={r[0]} className={`${grid} h-[25px] border-b border-[#d0d0d0] ${i % 2 ? 'bg-[#ebebeb]' : 'bg-white'}`}>
                <div className="pl-[4px] flex items-center gap-[2px] border-r border-[#dcdcdc]">
                  <DocIcon />
                  <span>{r[0]}</span>
                </div>
                <div className={cell}>{r[1]}</div>
                <div className={cell}>buy</div>
                <div className={cell}>0.01</div>
                <div className={cell}>{r[2]}</div>
                <div className={cell}>{r[3]}</div>
                <div className={cell}>0.00000</div>
                <div className={`${cell} bg-[#60f160]`}>{r[4]}</div>
                <div className={cell}>{r[5]}</div>
                <div className={cell}>{r[6]}</div>
                <div className={cell}>0.00</div>
                <div className={cell}>{r[7]}</div>
              </div>
            ))}
            <div className="h-[25px] flex items-center bg-[#c6c6c6] pl-[9px] pr-[3px]">
              <div className="w-[9px] h-[9px] rounded-full bg-[#b0b0b0] border-2 border-[#8c8c8c] mr-[9px]" />
              <span className="whitespace-pre">Profit/Loss: 10.54  Credit: 0.00  Deposit: 0.00  Withdrawal: 0.00</span>
              <span className="ml-auto">10.54</span>
            </div>
            <div className="h-[17px]" />
          </div>
          <div className="w-[21px] flex flex-col items-center bg-[#f0f0f0]">
            <div className="h-[25px] flex items-center"><Chevron d="M1 7l5-5 5 5" /></div>
            <div className="h-[125px]" />
            <div className="h-[145px] w-full bg-[#cdcdcd]" />
            <div className="h-[22px] flex items-center"><Chevron d="M1 1l5 5 5-5" /></div>
          </div>
        </div>
        <div className="h-[26px] flex border-t border-[#9c9c9c] bg-[#f0f0f0] text-[#6a6a6a] whitespace-nowrap">
          <div className="w-[69px] pl-[16px] flex items-center border-r border-[#9c9c9c]">Trade</div>
          <div className="w-[90px] flex items-center justify-center">Exposure</div>
          <div className="w-[139px] flex items-center justify-center bg-white text-[#0c0c0c] border-x border-b border-[#555]">Account History</div>
          <div className="w-[82px] flex items-center pl-[14px] border-r border-[#9c9c9c]">News<span className="mt-[11px] ml-[2px] text-[13.5px] text-[#f01010]">96</span></div>
          <div className="w-[66px] flex items-center justify-center border-r border-[#9c9c9c]">Alerts</div>
          <div className="w-[108px] flex items-center pl-[13px] border-r border-[#9c9c9c]">Mailbox<span className="mt-[11px] ml-[2px] text-[13.5px] text-[#f01010]">147</span></div>
          <div className="w-[76px] flex items-center justify-center border-r border-[#9c9c9c]">Market</div>
          <div className="w-[75px] flex items-center justify-center border-r border-[#9c9c9c]">Signals</div>
          <div className="w-[99px] flex items-center justify-center border-r border-[#9c9c9c]">Code Base</div>
          <div className="w-[77px] flex items-center justify-center border-r border-[#9c9c9c]">Experts</div>
          <div className="w-[78px] flex items-center justify-center border-r border-[#9c9c9c]">Journal</div>
        </div>
      </div>
    </div>
  )
}

function Exness() {
  return (
    <div className="w-[41px] h-[40px] bg-black flex flex-col items-center justify-center gap-[1px]">
      <svg width="27" height="14" viewBox="0 0 27 14">
        <path d="M10 1h6l-6 6H4l-3 6 M15 13h-6l8-12h7M18 6l6 7M6 7h7" fill="none" stroke="#f5c000" strokeWidth="1.5" />
      </svg>
      <div className="text-[9px] leading-[10px] font-bold text-white tracking-[0.3px]">exness</div>
    </div>
  )
}

const SegText = ({ w, children }: { w: string; children: ReactNode }) => (
  <div className={`${w} shrink-0 h-[20px] flex items-center pl-[5px] border-r border-[#a39668] whitespace-nowrap`}>{children}</div>
)

function Taskbar() {
  return (
    <div className="relative h-[44px] bg-[#bdb27c] border-t-2 border-[#c8bd8c] overflow-hidden text-[14.7px] font-semibold text-[#5f5330]">
      <div className="h-[33px] flex items-center pt-[8px] pl-[9px]">
        <div className="w-[640px] shrink-0 whitespace-nowrap">For Help, press F1</div>
        <div className="w-[156px] shrink-0 h-[20px] flex items-center border-r border-[#a39668]">Default</div>
        <SegText w="w-[136px]">2017.01.09 11:26</SegText>
        <SegText w="w-[94px]">O: 0.73217</SegText>
        <SegText w="w-[94px]">H: 0.73222</SegText>
        <SegText w="w-[89px]">L: 0.73200</SegText>
        <SegText w="w-[91px]">C: 0.73220</SegText>
        <SegText w="w-[88px]">V: 46</SegText>
        <div className="ml-[5px] w-[31px] h-[20px] shrink-0 grid grid-cols-[repeat(6,3px)] gap-x-[2px] items-end">
          {[0, 1, 2, 3, 4, 5].map((i) => (
            <div key={i} className="h-[18px] bg-[#8e8a2e]" />
          ))}
        </div>
        <div className="ml-[17px] whitespace-nowrap">16003/17 kb</div>
      </div>
      <div className="h-[9px] bg-[#b9a75a]" />
      <div className="absolute inset-0 flex items-center">
        <svg width="36" height="36" viewBox="0 0 36 36" className="ml-[11px] mt-[6px] shrink-0">
          <path d="M0 6l15-2v13H0zM17 3.5L36 1v16H17zM0 19h15v13L0 30zM17 19h19v16l-19-2.500z" fill="#fff" />
        </svg>
        <svg width="36" height="38" viewBox="0 0 36 38" className="ml-[28px] shrink-0">
          <path transform="translate(-3 -3) scale(1.15)" d="M18 8c-7 0-12 5-12 12s5 12 12 12c5 0 9-2 11-6h-7c-1 1-2 1.5-4 1.5-3 0-5-2-5-5h17c1-8-5-14.500-12-14.500zm-5 10c0-3 2-5 5-5s5 2 5 5z" fill="#2aa5e8" />
          <path d="M3 32C-1 24 12 7 26 3c6-2 9 0 7 6" fill="none" stroke="#f0c020" strokeWidth="2" />
        </svg>
        <svg width="38" height="40" viewBox="0 0 38 40" className="ml-[34px] shrink-0">
          <path d="M2 4h14l3 3h17v10H2z" fill="#f3dd94" stroke="#b99b48" />
          <rect x="6" y="1" width="26" height="10" fill="#fff" />
          <path d="M8 4h4M15 4h4" stroke="#d0502a" strokeWidth="2" />
          <path d="M2 13h34l-1 20H3z" fill="#8fc5ea" stroke="#b99b48" />
          <rect x="13" y="30" width="12" height="10" fill="#e9c667" />
        </svg>
        <div className="ml-[31px] w-[37px] h-[37px] shrink-0 bg-[#008a00] flex items-center justify-center">
          <svg width="24" height="26" viewBox="0 0 24 26">
            <path d="M8 7c0-6 8-6 8 0" fill="none" stroke="#fff" strokeWidth="1.5" />
            <path d="M2 6h20v19H2z" fill="#fff" />
            <path d="M6 11h5v4H6zM13 11h5v4h-5zM6 17h5v4H6zM13 17h5v4h-5z" fill="#008a00" />
          </svg>
        </div>
        <div className="ml-[34px] w-[37px] h-[37px] shrink-0 rounded-[8px] bg-[#c47a12] border-[3px] border-[#4a4a48] flex items-center justify-center">
          <svg width="22" height="24" viewBox="0 0 22 24">
            <path d="M2 3l8-1 3 19-8 1z" fill="#f3ead0" stroke="#6a4a10" />
            <path d="M10 2h9v20h-8z" fill="#fbf5e0" stroke="#6a4a10" />
            <path d="M13 6h4M13 10h4M13 14h4M13 18h4" stroke="#6a4a10" />
          </svg>
        </div>
        <svg width="36" height="36" viewBox="0 0 36 36" className="ml-[33px] shrink-0">
          <circle cx="18" cy="18" r="18" fill="#3aa757" />
          <path d="M18 0a18 18 0 0 1 15.6 9H18a9 9 0 0 0-8 5L3.700 7A18 18 0 0 1 18 0z" fill="#ea4335" />
          <path d="M33.6 9A18 18 0 0 1 18 36l8-14a9 9 0 0 0 0-13z" fill="#fbbc05" />
          <circle cx="18" cy="18" r="8" fill="#fff" />
          <circle cx="18" cy="18" r="6.5" fill="#4285f4" />
        </svg>
        <svg width="36" height="36" viewBox="0 0 36 36" className="ml-[35px] shrink-0">
          <circle cx="18" cy="18" r="17.5" fill="#e8622a" />
          <circle cx="18" cy="17" r="11" fill="#2f5fb8" />
          <path d="M5 8c2 5 6 3 9 5 4-3 9-2 11 2 2 6-3 13-10 12 7 4 16 0 19-8 0-8-6-16-14-17 3 3 3 6 2 7C18 6 11 3 5 8z" fill="#f5a623" />
          <path d="M2 18c0 10 8 17 17 17 5 0 10-3 13-7-6 5-14 5-20 1-5-3-8-7-10-11z" fill="#d6391f" />
        </svg>
        <div className="ml-[33px] w-[39px] h-[39px] shrink-0 rounded-full bg-white border-2 border-[#d8d8d8] flex items-center justify-center">
          <svg width="26" height="22" viewBox="0 0 26 22">
            <path d="M2 11C2 6 8 2 13 2s11 4 11 9-7 9-11 9S2 16 2 11zM5 8c6-2 12 0 17 6" fill="none" stroke="#66604e" strokeWidth="2.4" />
          </svg>
        </div>
        <div className="ml-[16px] w-[67px] h-[44px] shrink-0 flex justify-center items-end bg-[#fff]/25 border-x border-[#e2dab0]"><Exness /></div>
        <div className="ml-[3px] w-[67px] h-[44px] shrink-0 flex justify-center items-end bg-[#fff]/25 border-x border-[#e2dab0]"><Exness /></div>
      </div>
      <div className="absolute top-[22px] left-[1392px] w-0 h-0 border-x-[6px] border-x-transparent border-b-[6px] border-b-[#f0f0f0]" />
      <svg width="20" height="20" viewBox="0 0 20 20" className="absolute left-[1415px] top-[13px]">
        <path d="M1 2v5a2 2 0 0 0 4 0V2M3 9v10" stroke="#fff" strokeWidth="1.5" fill="none" />
        <rect x="8" y="3" width="10" height="16" rx="1" fill="none" stroke="#fff" strokeWidth="1.5" />
        <rect x="11" y="1" width="4" height="2" fill="#fff" />
      </svg>
      <svg width="18" height="16" viewBox="0 0 18 16" className="absolute left-[1446px] top-[17px]">
        <path d="M1 12h3v3H1zM5 9h3v6H5zM9 6h3v9H9zM13 2h3v13h-3z" fill="#fff" />
      </svg>
      <svg width="22" height="20" viewBox="0 0 22 20" className="absolute left-[1476px] top-[14px]">
        <path d="M1 7h4l6-6v18l-6-6H1z" fill="#f4f4f4" stroke="#888" strokeWidth="0.5" />
        <circle cx="15" cy="14" r="5" fill="#e02020" stroke="#fff" />
        <path d="M12 12l6 4" stroke="#fff" strokeWidth="1.5" />
      </svg>
      <div className="absolute right-[17px] top-[4px] text-right text-[15px] leading-[20px] font-normal text-[#f7f5ea] whitespace-nowrap">
        <div className="pr-[2px]">7:47 PM</div>
        <div>9/1/2017</div>
      </div>
      <div className="absolute right-[8px] bottom-[6px] w-[10px] h-[10px] bg-[repeating-linear-gradient(135deg,transparent_0px,transparent_2px,#a8a07a_2px,#a8a07a_3px)]" />
      <div className="absolute right-0 top-0 w-[8px] h-full bg-[#e9d46b]/60" />
    </div>
  )
}

export default function App() {
  return (
    <div className="relative w-[1600px] h-[895px] overflow-hidden flex flex-col pl-[3px] bg-white font-['Noto_Sans',sans-serif]">
      <div className="h-[17px] flex justify-end pr-[8px] bg-[#f0d86c] border-t border-[#c2aa4a] border-b border-b-[#222] shrink-0">
        <div className="w-[112px] bg-[#c85252]" />
      </div>
      <div className="h-[27px] shrink-0 flex items-center text-[#e6e6e6] text-[15px] bg-[repeating-linear-gradient(135deg,#1d1d1d_0px,#1d1d1d_2px,#2c2c2c_2px,#2c2c2c_4px)]">
        <div className="ml-[9px] w-0 h-0 border-x-[6px] border-x-transparent border-t-[7px] border-t-white" />
        <div className="ml-[11px] w-[15px] h-[13px] border-2 border-[#e0e0e0]" />
        <svg width="17" height="17" viewBox="0 0 17 17" className="ml-[11px]">
          <circle cx="7" cy="7" r="5.5" fill="none" stroke="#ddd" strokeWidth="1.5" />
          <path d="M11 11l5 5" stroke="#eee" strokeWidth="2.5" />
        </svg>
        <div className="ml-[8px]">1908x941</div>
        <div className="ml-auto w-[12px] h-[12px] rounded-full bg-[#d00000]" />
        <div className="ml-[5px] text-[16.5px] tracking-[0.3px]">REC</div>
        <svg width="19" height="15" viewBox="0 0 19 15" className="ml-[10px]">
          <path d="M0 3h5l1.5-3h6L14 3h5v12H0z" fill="#f4f4f4" />
          <circle cx="9.5" cy="8.5" r="3.5" fill="#222" />
        </svg>
        <div className="ml-[9px] w-px h-[10px] bg-[#888]" />
        <svg width="11" height="11" viewBox="0 0 11 11" className="ml-[7px] mr-[7px]">
          <path d="M.5.5l10 10M10.5.5l-10 10" stroke="#ddd" strokeWidth="1.2" />
        </svg>
      </div>
      <div className="h-[19px] shrink-0 bg-[#f0d86c] flex border-b border-[#d8c060] pt-[5px]">
        <div className="ml-[885px] w-[10px] h-[4px] bg-[#222]" />
        <div className="ml-[248px] w-[10px] h-[4px] bg-[#222]" />
      </div>
      <div className="flex flex-1 min-h-0">
        <div className="w-[7px] shrink-0 flex flex-col bg-[#f0d86c]">
          <div className="h-[58px]" />
          <div className="flex-1 bg-[#d6e4ee]" />
        </div>
        <div className="w-[1580px] shrink-0 flex flex-col">
          <MenuBar />
          <Toolbar />
          <div className="h-[2px] bg-[#f0f0f0]" />
          <Chart />
          <ChartTabs />
          <Terminal />
        </div>
        <div className="flex-1 bg-[#f0d86c]" />
      </div>
      <Taskbar />
      {/* blue capture frame from the recorder, lies over the whole window */}
      <div className="absolute left-[3px] top-[44px] w-[1597px] h-[795px] border-l-[4px] border-r-[2px] border-t-[5px] border-b-[5px] border-[#3c7ea6] pointer-events-none" />
    </div>
  )
}
